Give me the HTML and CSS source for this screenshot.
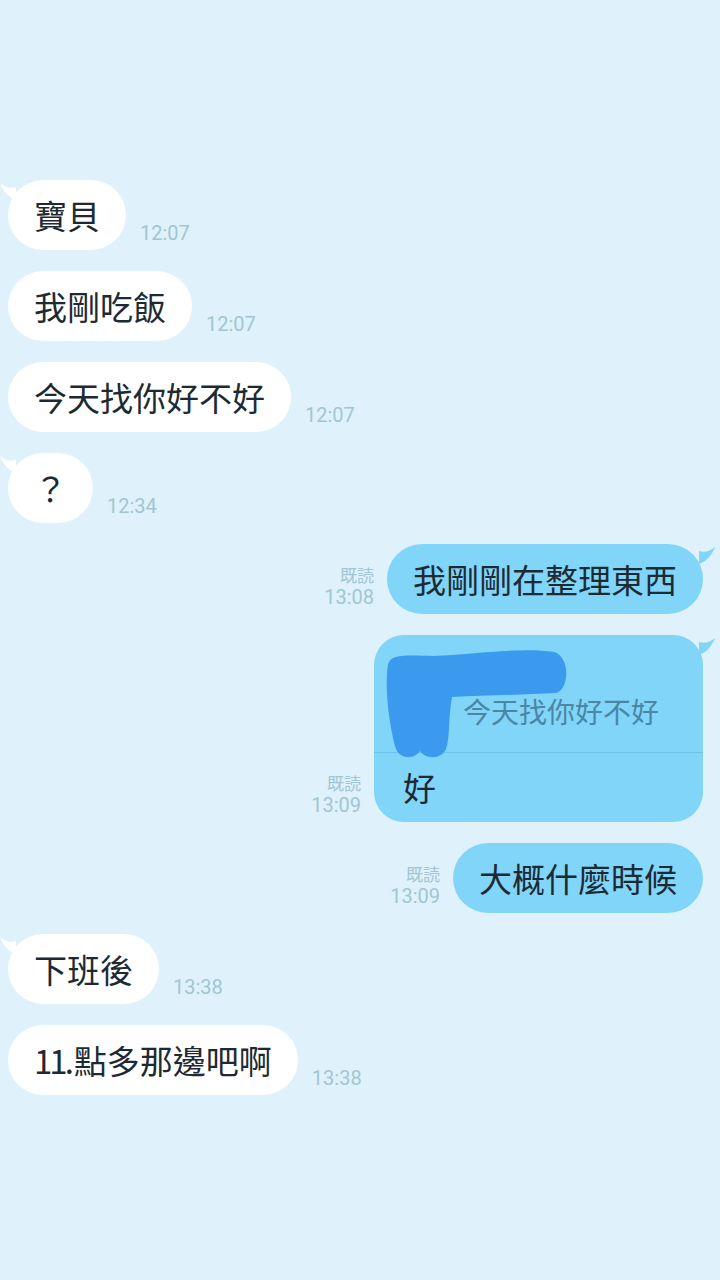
FILE: index.html
```html
<!DOCTYPE html>
<html>
<head>
<meta charset="utf-8">
<title>聊天</title>
<link rel="stylesheet" href="styles.css">
</head>
<body>
  <div class="chat">
    <div class="row left">
      <div class="bubble tail">
        <svg class="tail-l" width="16" height="20" viewBox="0 0 16 20"><path d="M16 6 C10 8 5 6 0 2 C3 10 8 16 16 19 Z" fill="#fff"/></svg>
        寶貝
      </div>
      <div class="meta"><span class="time">12:07</span></div>
    </div>
    <div class="row left">
      <div class="bubble">我剛吃飯</div>
      <div class="meta"><span class="time">12:07</span></div>
    </div>
    <div class="row left">
      <div class="bubble">今天找你好不好</div>
      <div class="meta"><span class="time">12:07</span></div>
    </div>
    <div class="row left">
      <div class="bubble tail">
        <svg class="tail-l" width="16" height="20" viewBox="0 0 16 20"><path d="M16 6 C10 8 5 6 0 2 C3 10 8 16 16 19 Z" fill="#fff"/></svg>
        ？
      </div>
      <div class="meta"><span class="time">12:34</span></div>
    </div>

    <div class="row right">
      <div class="meta"><span class="read">既読</span><span class="time">13:08</span></div>
      <div class="bubble tail">
        <svg class="tail-r" width="16" height="20" viewBox="0 0 16 20"><path d="M0 6 C6 8 11 6 16 2 C13 10 8 16 0 19 Z" fill="#80d5f9"/></svg>
        我剛剛在整理東西
      </div>
    </div>
    <div class="row right">
      <div class="meta"><span class="read">既読</span><span class="time">13:09</span></div>
      <div class="bubble reply tail">
        <svg class="tail-r" width="16" height="20" viewBox="0 0 16 20"><path d="M0 6 C6 8 11 6 16 2 C13 10 8 16 0 19 Z" fill="#80d5f9"/></svg>
        <div class="quote">今天找你好不好</div>
        <div class="answer">好</div>
        <svg class="scribble" width="200" height="124" viewBox="0 0 200 124"><path d="M14 26 C16 15 30 16 60 17 C100 15 150 8 180 13 C196 17 196 50 182 54 C150 56 110 56 78 58 C74 80 76 100 72 110 C68 120 52 121 46 112 C40 121 26 120 22 110 C16 90 10 50 14 26 Z" fill="#3b99ee"/></svg>
      </div>
    </div>
    <div class="row right">
      <div class="meta"><span class="read">既読</span><span class="time">13:09</span></div>
      <div class="bubble">大概什麼時候</div>
    </div>

    <div class="row left">
      <div class="bubble tail">
        <svg class="tail-l" width="16" height="20" viewBox="0 0 16 20"><path d="M16 6 C10 8 5 6 0 2 C3 10 8 16 16 19 Z" fill="#fff"/></svg>
        下班後
      </div>
      <div class="meta"><span class="time">13:38</span></div>
    </div>
    <div class="row left">
      <div class="bubble"><span class="num">11.</span>點多那邊吧啊</div>
      <div class="meta"><span class="time">13:38</span></div>
    </div>
  </div>
</body>
</html>
```

FILE: styles.css
```css
body {
  margin: 0;
  background-color: #dff1fb;
  font-family: "Noto Sans CJK TC", "Noto Sans", sans-serif;
  color: #1d2a33;
}
.chat {
  display: flex;
  flex-direction: column;
  gap: 21px;
  padding: 180px 17px 0 8px;
  min-height: 1100px;
}
.row {
  display: flex;
  align-items: flex-end;
  gap: 14px;
}
.row.right {
  justify-content: flex-end;
  gap: 13px;
}
.bubble {
  position: relative;
  background-color: #fff;
  font-size: 33px;
  line-height: 42px;
  padding: 14px 26px;
  border-radius: 35px;
  white-space: nowrap;
}
.num {
  letter-spacing: -3px;
  margin-right: 3px;
}
.right .bubble {
  background-color: #80d5f9;
}
.tail-l {
  position: absolute;
  left: -8px;
  top: 1px;
}
.tail-r {
  position: absolute;
  right: -12px;
  top: 1px;
}
.meta {
  display: flex;
  flex-direction: column;
  align-items: flex-end;
  padding-bottom: 6px;
  color: #a1c6d2;
  font-family: Roboto, "Liberation Sans", sans-serif;
}
.time {
  font-size: 20px;
  line-height: 22px;
}
.read {
  font-family: "Noto Sans CJK JP", sans-serif;
  font-size: 17px;
  line-height: 22px;
}
.bubble.reply {
  width: 329px;
  box-sizing: border-box;
  padding: 0;
  border-radius: 30px;
}
.quote {
  height: 118px;
  box-sizing: border-box;
  padding: 58px 0 0 89px;
  font-size: 28px;
  line-height: 36px;
  color: #4b87a4;
  border-bottom: 1px solid #6cc3ea;
}
.answer {
  padding: 13px 29px 14px;
}
.scribble {
  position: absolute;
  left: 0;
  top: 4px;
}
```
